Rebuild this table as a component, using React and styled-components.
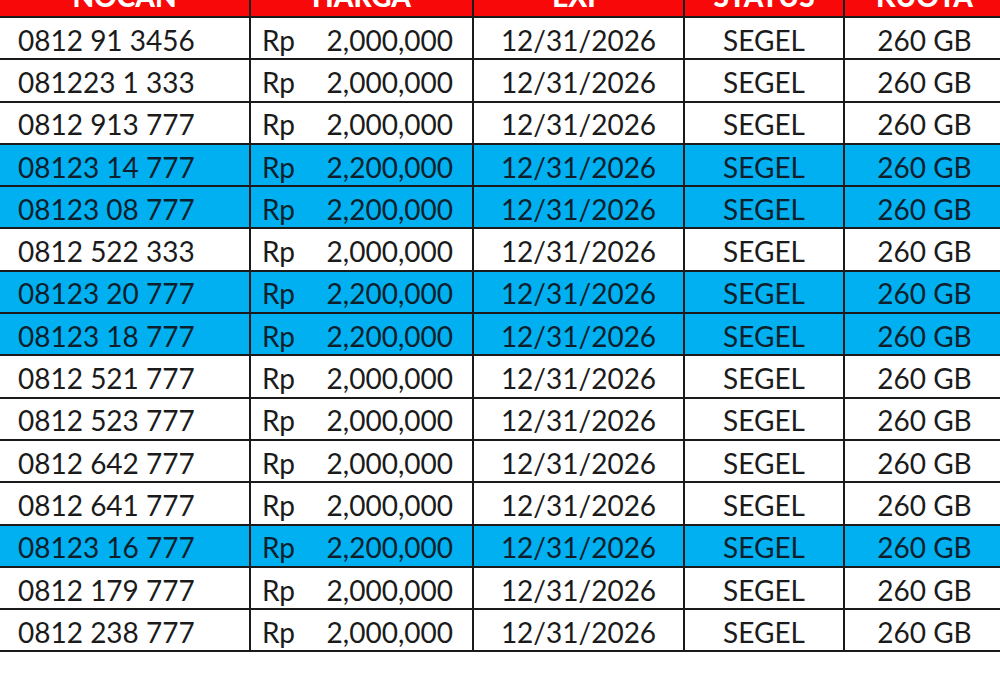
import React from "react";
import styled, { createGlobalStyle } from "styled-components";

const GlobalStyle = createGlobalStyle`
  html, body {
    margin: 0;
    padding: 0;
    background: #ffffff;
    overflow: hidden;
  }
  body {
    font-family: Lato, "Open Sans", sans-serif;
  }
`;

const Page = styled.div`
  width: 1000px;
  height: 678px;
  overflow: hidden;
  background: #fff;
`;

const Table = styled.table`
  border-collapse: collapse;
  table-layout: fixed;
  width: 1006px;
  margin-top: -24px;
  margin-left: -2px;
  font-size: 28px;
  color: #1b1b1b;
`;

const HeadCell = styled.th`
  height: 40px;
  padding: 0;
  background: #f80808;
  color: #fff;
  font-weight: 900;
  font-size: 28px;
  text-align: center;
  border: 2px solid #1a1a1a;
  border-top: none;
  vertical-align: middle;
`;

const Row = styled.tr`
  background: ${(props) => (props.$highlight ? "#00b0f0" : "#ffffff")};
  color: ${(props) => (props.$highlight ? "#0d1f2c" : "#1b1b1b")};
`;

const Cell = styled.td`
  height: 37.3px;
  padding: 3px 0 0;
  padding-left: ${(props) => (props.$align === "left" ? "18px" : "0")};
  border: 2px solid #1a1a1a;
  text-align: ${(props) => props.$align || "center"};
  vertical-align: middle;
  white-space: nowrap;
  line-height: 1;
`;

const Price = styled.div`
  display: flex;
  justify-content: space-between;
  padding: 0 19px 0 11px;
`;

const rows = [
  ["0812 91 3456", false],
  ["081223 1 333", false],
  ["0812 913 777", false],
  ["08123 14 777", true],
  ["08123 08 777", true],
  ["0812 522 333", false],
  ["08123 20 777", true],
  ["08123 18 777", true],
  ["0812 521 777", false],
  ["0812 523 777", false],
  ["0812 642 777", false],
  ["0812 641 777", false],
  ["08123 16 777", true],
  ["0812 179 777", false],
  ["0812 238 777", false],
];

export default function App() {
  return (
    <Page>
      <GlobalStyle />
      <Table>
        <colgroup>
          <col style={{ width: 251 }} />
          <col style={{ width: 223 }} />
          <col style={{ width: 211 }} />
          <col style={{ width: 160 }} />
          <col style={{ width: 161 }} />
        </colgroup>
        <thead>
          <tr>
            <HeadCell>NOCAN</HeadCell>
            <HeadCell>HARGA</HeadCell>
            <HeadCell>EXP</HeadCell>
            <HeadCell>STATUS</HeadCell>
            <HeadCell>KUOTA</HeadCell>
          </tr>
        </thead>
        <tbody>
          {rows.map(([number, special]) => (
            <Row key={number} $highlight={special}>
              <Cell $align="left">{number}</Cell>
              <Cell>
                <Price>
                  <span>Rp</span>
                  <span>{special ? "2,200,000" : "2,000,000"}</span>
                </Price>
              </Cell>
              <Cell>12/31/2026</Cell>
              <Cell>SEGEL</Cell>
              <Cell>260 GB</Cell>
            </Row>
          ))}
        </tbody>
      </Table>
    </Page>
  );
}
